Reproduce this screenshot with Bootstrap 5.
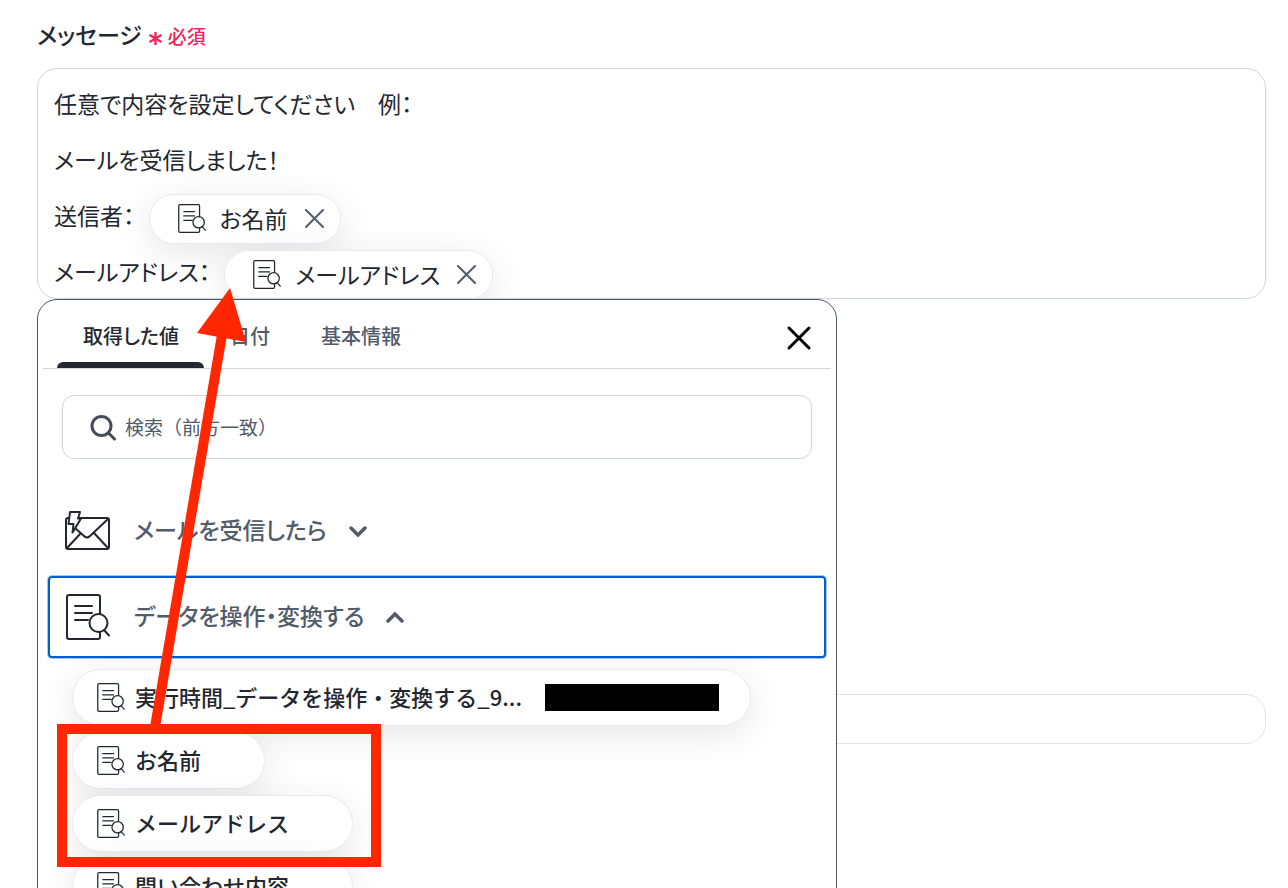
<!DOCTYPE html>
<html lang="ja">
<head>
<meta charset="utf-8">
<meta name="viewport" content="width=device-width, initial-scale=1">
<title>メッセージ設定</title>
<link href="https://cdn.jsdelivr.net/npm/bootstrap@5.3.0/dist/css/bootstrap.min.css" rel="stylesheet">
<script src="https://cdn.jsdelivr.net/npm/bootstrap@5.3.0/dist/js/bootstrap.bundle.min.js" defer></script>
<style>
:root{--ink:#23272f;--muted-ink:#525b69;--line:#cfd5de;--alert:#ff2600}
body{font-family:"Noto Sans CJK JP",sans-serif;font-size:23px;line-height:32px;color:var(--ink);background:#fff}
.palt{font-feature-settings:"palt"}
.form-page{padding:16px 22px 0 37px}
.field-label{font-weight:500}
.required-mark{gap:6px;margin-left:7px;color:#f2245a;font-size:19px;font-weight:500}
.editor{height:231px;padding:7px 16px 0;border:1px solid var(--line);border-radius:20px;overflow:hidden;outline:0}
.editor-line{height:56px;padding-bottom:3px}
.token{height:50px;margin:8px 0 0 14px;padding:0 16px 0 28px;border:1px solid #e8eaf0;border-radius:25px;background:#fff;box-shadow:0 8px 36px rgba(0,0,0,.1)}
.token-name{margin:0 17px 0 14px;padding-bottom:2px}
.plain-btn{border:0;background:none;padding:0;color:inherit;line-height:1}
.picker{position:absolute;top:100%;left:0;z-index:10;width:800px;max-width:100%;background:#fff;border:1px solid #4d5665;border-radius:20px}
.picker-tabs{margin:0 5px;padding:0 19px 0 14px;height:69px;border-bottom:1px solid var(--line)}
.picker-tab{height:68px;padding:10px 25px 0 26px;font-size:20px;font-weight:500;color:var(--muted-ink);border-bottom:6px solid transparent}
.picker-tab.active{color:var(--ink);position:relative}
.picker-tab.active::after{content:"";position:absolute;left:0;right:0;bottom:-6px;height:6px;border-radius:6px 6px 0 0;background:var(--ink)}
.search-box{height:64px;margin:26px 24px 0;padding:0 27px;border:1px solid var(--line);border-radius:12px}
.search-box input{border:0;outline:0;background:none;font-size:19px;color:var(--ink);padding:0}
.search-box input::placeholder{color:var(--muted-ink);opacity:1}
.group-list{margin:31px 10px 0}
.group-btn{height:82px;padding:0 16px;color:var(--muted-ink);font-weight:500;border-radius:4px}
.group-name{margin:0 22px;padding-bottom:3px}
.group-btn.selected{outline:2px solid #005fcc;outline-offset:-2px;box-shadow:0 0 0 1px #a9c6ec}
.chip-list{padding:11px 34px 0;gap:6px}
.chip{height:57px;padding:0 63px 0 24px;font-size:22px;font-weight:500;color:var(--ink);background:#fff;border:1px solid #e8eaf0;border-radius:29px;box-shadow:0 8px 36px rgba(0,0,0,.1)}
.chip-name{margin-left:10px;padding-bottom:3px}
.chip.with-value{padding-right:31px}
.redacted{width:174px;height:27px;margin-left:23px;background:#000}
.next-field{height:50px;margin-top:395px;border:1px solid #e2e3e6;border-radius:20px;width:100%}
.annotation{position:absolute;top:0;left:0;z-index:20;pointer-events:none}
svg{flex:none;display:block}
</style>
</head>
<body>
<svg width="0" height="0" class="position-absolute" aria-hidden="true">
  <symbol id="doc" viewBox="0 0 44 46">
    <g fill="none" stroke="#23272f" stroke-width="2" stroke-linecap="round">
      <rect x="1" y="1" width="33" height="44" rx="2"/>
      <path d="M9 12h17M9 19h17M9 26h13"/>
      <circle cx="32.5" cy="29" r="9" fill="#fff"/>
      <path d="M38 36l5 5.500"/>
    </g>
  </symbol>
</svg>
<div class="vh-100 overflow-hidden position-relative">
<main class="form-page">
  <div class="d-flex align-items-center">
    <span class="field-label palt" id="msg-label">メッセージ</span>
    <span class="required-mark d-flex align-items-center pt-1">
      <svg class="mt-1" width="13" height="13" viewBox="0 0 13 13" fill="none" stroke="#f2245a" stroke-width="2.400"><path d="M6.500 0v13M0.500 3l12 7M12.500 3l-12 7"/></svg>
      <span>必須</span>
    </span>
  </div>
  <div class="position-relative mt-3">
    <div class="editor palt" role="textbox" aria-multiline="true" aria-labelledby="msg-label" contenteditable="true" spellcheck="false">
      <div class="editor-line d-flex align-items-center">任意で内容を設定してください　例：</div>
      <div class="editor-line d-flex align-items-center">メールを受信しました！</div>
      <div class="editor-line d-flex align-items-center">送信者：
        <span class="token d-flex align-items-center"><svg width="28" height="29"><use href="#doc"/></svg><span class="token-name">お名前</span><button type="button" class="plain-btn" aria-label="削除"><svg width="19" height="19" viewBox="0 0 19 19" stroke="#525b69" stroke-width="2" stroke-linecap="round"><path d="M1 1l17 17M18 1L1 18"/></svg></button></span>
      </div>
      <div class="editor-line d-flex align-items-center">メールアドレス：
        <span class="token d-flex align-items-center"><svg width="28" height="29"><use href="#doc"/></svg><span class="token-name">メールアドレス</span><button type="button" class="plain-btn" aria-label="削除"><svg width="19" height="19" viewBox="0 0 19 19" stroke="#525b69" stroke-width="2" stroke-linecap="round"><path d="M1 1l17 17M18 1L1 18"/></svg></button></span>
      </div>
    </div>
    <section class="picker">
      <div class="picker-tabs d-flex align-items-center" role="tablist">
        <button type="button" role="tab" aria-selected="true" class="plain-btn picker-tab palt active">取得した値</button>
        <button type="button" role="tab" aria-selected="false" class="plain-btn picker-tab palt">日付</button>
        <button type="button" role="tab" aria-selected="false" class="plain-btn picker-tab palt">基本情報</button>
        <button type="button" class="plain-btn ms-auto pt-2" aria-label="閉じる"><svg width="26" height="26" viewBox="0 0 26 26" stroke="#000" stroke-width="3" stroke-linecap="round"><path d="M3 3l20 20M23 3L3 23"/></svg></button>
      </div>
      <label class="search-box d-flex align-items-center">
        <svg width="27" height="27" viewBox="0 0 27 27" fill="none" stroke="#444c59" stroke-width="3" stroke-linecap="round"><circle cx="11.500" cy="12" r="9.500"/><path d="M18.500 19l6 6"/></svg>
        <input type="search" class="flex-grow-1 ms-2" placeholder="検索（前方一致）" aria-label="検索">
      </label>
      <div class="group-list d-flex flex-column gap-1">
        <button type="button" class="plain-btn group-btn palt d-flex align-items-center" aria-expanded="false">
          <svg width="48" height="40" viewBox="0 0 48 40" fill="none" stroke="#23272f" stroke-width="2" stroke-linejoin="round"><rect x="2" y="7" width="43" height="31" rx="2"/><path d="M44 8L26 25q-3 3-6 0l-9-8M3 37l14-15M44 37L30 22"/><path fill="#fff" d="M6 1h10l-2 6.500h3L8.500 21.500l1-8.500H4.500z"/></svg>
          <span class="group-name">メールを受信したら</span>
          <svg width="18" height="12" viewBox="0 0 18 12" fill="none" stroke="#525b69" stroke-width="3.500" stroke-linecap="round"><path d="M2 3l7 7 7-7"/></svg>
        </button>
        <button type="button" class="plain-btn group-btn selected palt d-flex align-items-center" aria-expanded="true">
          <svg width="48" height="46"><use href="#doc"/></svg>
          <span class="group-name">データを操作・変換する</span>
          <svg width="18" height="12" viewBox="0 0 18 12" fill="none" stroke="#525b69" stroke-width="3.500" stroke-linecap="round"><path d="M2 10l7-7 7 7"/></svg>
        </button>
      </div>
      <div class="chip-list d-flex flex-column align-items-start">
        <button type="button" class="plain-btn chip with-value d-flex align-items-center"><svg width="28" height="29"><use href="#doc"/></svg><span class="chip-name">実行時間_データを操作・変換する_9...</span><span class="redacted"></span></button>
        <button type="button" class="plain-btn chip d-flex align-items-center"><svg width="28" height="29"><use href="#doc"/></svg><span class="chip-name">お名前</span></button>
        <button type="button" class="plain-btn chip d-flex align-items-center"><svg width="28" height="29"><use href="#doc"/></svg><span class="chip-name">メールアドレス</span></button>
        <button type="button" class="plain-btn chip d-flex align-items-center"><svg width="28" height="29"><use href="#doc"/></svg><span class="chip-name">問い合わせ内容</span></button>
      </div>
    </section>
  </div>
  <input type="text" class="next-field d-block" aria-label="入力欄">
</main>
<svg class="annotation" width="400" height="888" viewBox="0 0 400 888" aria-hidden="true">
  <rect x="62" y="729" width="314" height="133" fill="none" stroke="#ff2600" stroke-width="10"/>
  <path d="M155 727L222 335" stroke="#ff2600" stroke-width="10"/>
  <path d="M230 288l16 54-49-9z" fill="#ff2600"/>
</svg>
</div>
</body>
</html>
